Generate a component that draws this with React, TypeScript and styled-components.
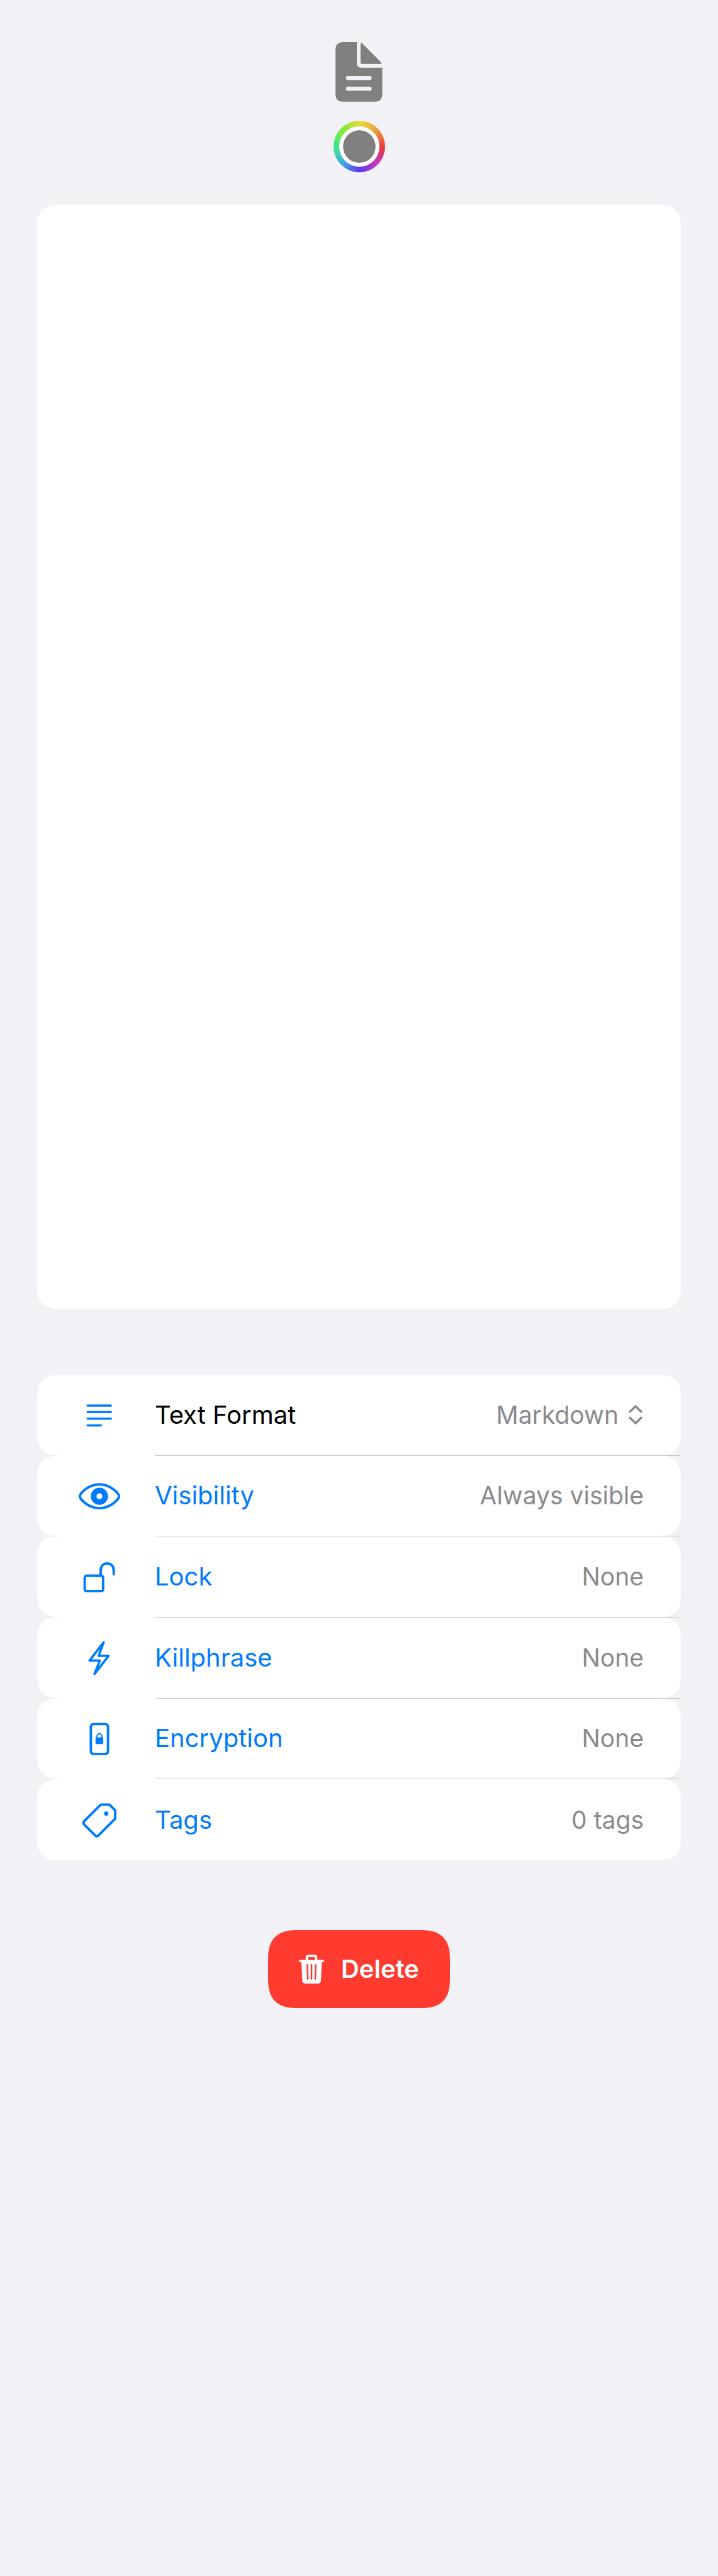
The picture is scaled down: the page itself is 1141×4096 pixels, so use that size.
import React, { useState } from "react";
import styled, { createGlobalStyle } from "styled-components";

const colors = {
  page: "#f2f1f6",
  card: "#ffffff",
  tint: "#007aff",
  text: "#000000",
  secondary: "#8a8a8e",
  separator: "#c6c6c8",
  icon: "#808080",
  danger: "#ff3b30",
};

const GlobalStyle = createGlobalStyle`
  *, *::before, *::after { box-sizing: border-box; }
  body { margin: 0; background: ${colors.page}; }
  button, select, textarea, input { font: inherit; color: inherit; margin: 0; }
  svg { display: block; }
`;

const Page = styled.main`
  display: flex;
  flex-direction: column;
  align-items: center;
  min-height: 100vh;
  padding: 67px 59px;
  background: ${colors.page};
  color: ${colors.text};
  font-family: Inter, "Liberation Sans", sans-serif;
  font-size: 40px;
  line-height: 48px;
`;

const Header = styled.header`
  display: flex;
  flex-direction: column;
  align-items: center;
  gap: 30px;
  margin-bottom: 52px;
`;

const IconButton = styled.button`
  display: block;
  padding: 0;
  border: 0;
  background: none;
  cursor: pointer;
`;

const ColorRing = styled.label`
  display: grid;
  place-items: center;
  width: 82px;
  height: 82px;
  border-radius: 50%;
  background: conic-gradient(
    #e6dc40, #e8a43c 45deg, #e93d3b 90deg, #c437c4 135deg, #5f3ce8 180deg,
    #46aae0 225deg, #3fe68c 270deg, #7eea3b 315deg, #e6dc40
  );
`;

const ColorInput = styled.input`
  appearance: none;
  width: 64px;
  height: 64px;
  padding: 0;
  border: 6px solid #ffffff;
  border-radius: 50%;
  background: #ffffff;
  overflow: hidden;
  cursor: pointer;

  &::-webkit-color-swatch-wrapper { padding: 0; }
  &::-webkit-color-swatch { border: 0; border-radius: 50%; }
`;

const cardCorners = `
  border-radius: 30px;
  @supports (corner-shape: superellipse(1.4)) {
    border-radius: 36px;
    corner-shape: superellipse(1.4);
  }
`;

const Editor = styled.textarea`
  display: block;
  width: 100%;
  height: 1755px;
  margin-bottom: 105px;
  padding: 40px;
  border: 0;
  ${cardCorners}
  background: ${colors.card};
  resize: none;
  outline: none;
`;

const Settings = styled.div`
  display: grid;
  grid-auto-rows: 1fr;
  width: 100%;
  min-height: 772px;
  margin-bottom: 111px;
`;

const Item = styled.div`
  display: grid;
  grid-template-rows: 1fr 1px;

  &::after {
    content: "";
    margin-left: 36px;
    border-left: 151px solid ${colors.card};
    background: ${colors.separator};
  }
  &:last-child { grid-template-rows: 1fr; }
  &:last-child::after { content: none; }
`;

const rowStyles = `
  display: flex;
  align-items: center;
  width: 100%;
  padding: 0 59px 0 60px;
  border: 0;
  ${cardCorners}
  background: ${colors.card};
  text-align: left;
`;

const FieldRow = styled.div`
  ${rowStyles}
  padding-right: 61px;
`;

const ButtonRow = styled.button`
  ${rowStyles}
  cursor: pointer;
`;

const RowIcon = styled.svg`
  flex: none;
  width: 78px;
  height: 78px;
  margin-right: 49px;
  fill: none;
  stroke: ${colors.tint};
  stroke-width: 4;
  stroke-linecap: round;
  stroke-linejoin: round;
`;

const Name = styled.span<{ $tinted?: boolean }>`
  flex: 1;
  color: ${(p) => (p.$tinted ? colors.tint : colors.text)};
`;

const Value = styled.span`
  color: ${colors.secondary};
  font-size: 39px;
`;

const Picker = styled.span`
  display: flex;
  align-items: center;
  gap: 16px;
  color: ${colors.secondary};
  font-size: 39px;
`;

const Select = styled.select`
  appearance: none;
  field-sizing: content;
  padding: 0;
  border: 0;
  background: none;
  outline: none;
  cursor: pointer;
`;

const DeleteButton = styled.button`
  display: flex;
  align-items: center;
  gap: 27px;
  height: 124px;
  padding: 0 49px;
  border: 0;
  border-radius: 40px;
  @supports (corner-shape: superellipse(1.4)) {
    border-radius: 48px;
    corner-shape: superellipse(1.4);
  }
  background: ${colors.danger};
  color: #ffffff;
  font-weight: 600;
  cursor: pointer;
`;

const DocumentIcon = () => (
  <svg width="75" height="95" viewBox="0 0 77 98" fill={colors.icon} aria-hidden="true">
    <path d="M12 0H35V34.500Q35 42 42.500 42H76.700V85Q76.700 97.700 64 97.700H12.500Q0 97.700 0 85V12.500Q0 0 12.500 0Z" />
    <path d="M41 2.500Q41 .5 43.500 1.800L74.800 33Q76.600 35.800 74 35.800H43.500Q41 35.800 41 33.300Z" />
    <g fill={colors.page}>
      <rect x="17" y="55.600" width="42.300" height="6.600" rx="3.300" />
      <rect x="17" y="73" width="42.300" height="6.600" rx="3.300" />
    </g>
  </svg>
);

const ChevronsIcon = () => (
  <svg width="22" height="31" viewBox="0 0 22 32" fill="none" stroke={colors.secondary}
    strokeWidth="3.600" strokeLinecap="round" strokeLinejoin="round" aria-hidden="true">
    <path d="M1.800 11L11 2L20.200 11M1.800 21L11 30L20.200 21" />
  </svg>
);

const TrashIcon = () => (
  <svg width="40" height="46" viewBox="0 0 41 47" fill="#ffffff" aria-hidden="true">
    <path d="M13 10V5.200Q13 2 16.200 2H24.800Q28 2 28 5.200V10" fill="none" stroke="#ffffff" strokeWidth="4" />
    <rect y="8.300" width="41" height="4" rx="2" />
    <path d="M4 11H37.300L35.900 42.500Q35.500 47 31 47H10.300Q5.800 47 5.500 42.500Z" />
    <path d="M13.600 16.500L14.500 39.500M20.500 16.500V39.500M27.500 16.500L26.600 39.500" stroke={colors.danger}
      strokeWidth="2.600" strokeLinecap="round" />
  </svg>
);

const icons: Record<string, React.ReactNode> = {
  text: (
    <path d="M20.800 24.500H58.600M20.800 35.200H58.600M20.800 46H58.600M20.800 56.800H42.200" strokeWidth="3.600" />
  ),
  eye: (
    <>
      <path d="M8 41.200C8 36.500 22 21.800 40 21.800S72 36.500 72 41.200S58 60.600 40 60.600S8 45.900 8 41.200Z" />
      <circle cx="40" cy="41.200" r="9.400" strokeWidth="9.200" />
    </>
  ),
  lock: (
    <>
      <rect x="16" y="38.500" width="30" height="25" rx="3" />
      <path d="M42 38V30.500C42 22.500 46.300 18.500 52.600 18.500S63.300 22.500 63.300 30.500V36" />
    </>
  ),
  bolt: (
    <path d="M47 14.500L38.700 36.800H55L32 66.500L40.600 44.500H24Z" strokeWidth="3.800" />
  ),
  phone: (
    <>
      <rect x="26" y="16.800" width="28" height="48.700" rx="4.500" />
      <rect x="33.700" y="38.500" width="12.600" height="11" rx="1.500" fill={colors.tint} stroke="none" />
      <path d="M36 39V36.500A4 4 0 0 1 44 36.500V39" strokeWidth="2" />
    </>
  ),
  tag: (
    <>
      <path d="M42.300 14.800H56.300L65.700 24.200V37.800L38.200 65.300Q35.700 67.400 33.200 65.300L15.200 47.300Q12.700 44.500 15.200 41.700Z" />
      <circle cx="51" cy="29.500" r="3.500" fill={colors.tint} stroke="none" />
    </>
  ),
};

const rows = [
  { icon: "eye", name: "Visibility", value: "Always visible" },
  { icon: "lock", name: "Lock", value: "None" },
  { icon: "bolt", name: "Killphrase", value: "None" },
  { icon: "phone", name: "Encryption", value: "None" },
  { icon: "tag", name: "Tags", value: "0 tags" },
];

const Icon = ({ name }: { name: string }) => (
  <RowIcon viewBox="0 0 80 80" aria-hidden="true">{icons[name]}</RowIcon>
);

export default function App() {
  const [color, setColor] = useState("#808080");
  const [note, setNote] = useState("");

  return (
    <>
      <GlobalStyle />
      <Page>
        <Header>
          <IconButton type="button" aria-label="Note icon">
            <DocumentIcon />
          </IconButton>
          <ColorRing htmlFor="note-color">
            <ColorInput id="note-color" type="color" aria-label="Note color" value={color}
              onChange={(e) => setColor(e.target.value)} />
          </ColorRing>
        </Header>
        <Editor aria-label="Note text" value={note} onChange={(e) => setNote(e.target.value)} />
        <Settings>
          <Item>
            <FieldRow>
              <Icon name="text" />
              <Name as="label" htmlFor="text-format">Text Format</Name>
              <Picker>
                <Select id="text-format" defaultValue="Markdown">
                  <option>Markdown</option>
                </Select>
                <ChevronsIcon />
              </Picker>
            </FieldRow>
          </Item>
          {rows.map((row) => (
            <Item key={row.name}>
              <ButtonRow type="button">
                <Icon name={row.icon} />
                <Name $tinted>{row.name}</Name>
                <Value>{row.value}</Value>
              </ButtonRow>
            </Item>
          ))}
        </Settings>
        <DeleteButton type="button">
          <TrashIcon />
          Delete
        </DeleteButton>
      </Page>
    </>
  );
}
